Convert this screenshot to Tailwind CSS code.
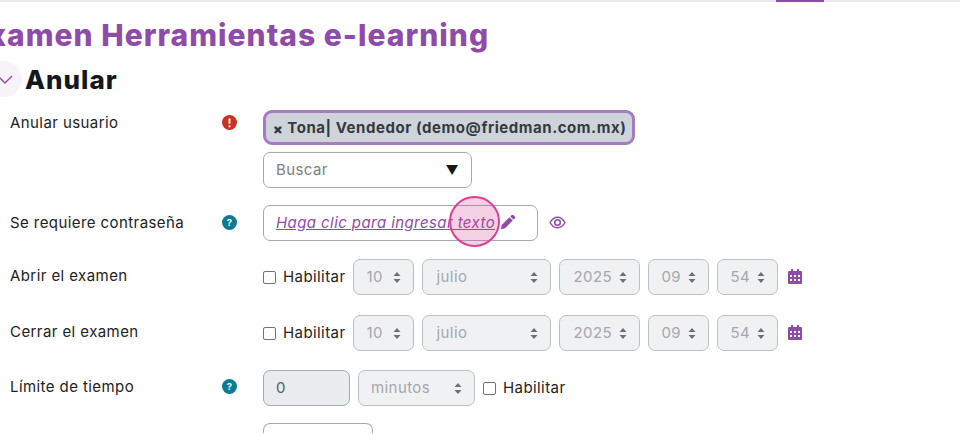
<!DOCTYPE html>
<html lang="es">
  <head>
    <meta charset="UTF-8" />
    <title>Examen Herramientas e-learning</title>
    <script src="https://cdn.jsdelivr.net/npm/@tailwindcss/browser@4"></script>
  </head>
  <body class="bg-white text-[#1d2125] font-['Inter',sans-serif] text-[15px] tracking-[0.42px] h-[434px] w-[960px] overflow-hidden relative">
    <!-- top nav edge with active tab -->
    <div class="h-[2px] bg-[#e6e9ee] pl-[776px]">
      <div class="h-[2px] w-[48px] bg-[#8f4ba8]"></div>
    </div>

    <h1 class="mt-[14px] ml-[-31px] h-[38px] text-[30px] leading-[38px] font-extrabold text-[#8f4ba8] whitespace-nowrap tracking-[1.02px]">Examen Herramientas e-learning</h1>

    <div class="flex items-center h-[36px] mt-[7px] ml-[-14px]">
      <span class="w-[36px] h-[36px] rounded-full bg-[#f7f3f9] flex items-center justify-center">
        <svg class="ml-[1px]" width="16" height="9" viewBox="0 0 16 9" fill="none" stroke="#8f4ba8" stroke-width="1.4"><path d="M1 1l7 7 7-7" /></svg>
      </span>
      <h2 class="ml-[3px] text-[26px] font-extrabold tracking-[1px] text-[#14181c]">Anular</h2>
    </div>

    <!-- Anular usuario -->
    <div class="flex mt-[13px] pl-[10px]">
      <div class="w-[212px] leading-[22px] pt-[2px]">Anular usuario</div>
      <div class="w-[41px] pt-[5px]">
        <svg width="15" height="15" viewBox="0 0 16 16"><circle cx="8" cy="8" r="8" fill="#ca3120" /><rect x="7" y="3.500" width="2" height="6" rx="1" fill="#fff" /><circle cx="8" cy="12" r="1.200" fill="#fff" /></svg>
      </div>
      <div>
        <div class="w-[372px] h-[35px] pt-[1px] rounded-[9px] border-[3px] border-[#a67cc0] bg-[#ced4da] flex items-center pl-[7px] font-bold tracking-[0.55px] text-[#343a40] whitespace-nowrap">
          <span class="text-[14px] font-black mr-[4px]">×</span>Tona| Vendedor (demo@friedman.com.mx)
        </div>
        <div class="mt-[7px] w-[209px] h-[36px] pt-[1px] rounded-[7px] border border-[#a5a9b3] flex items-center justify-between pl-[12px] pr-[12px] text-[#7b8085]">
          <span>Buscar</span><span class="text-[#14181c] text-[13px]">▼</span>
        </div>
      </div>
    </div>

    <!-- Se requiere contraseña -->
    <div class="flex items-center mt-[17px] pl-[10px] h-[36px]">
      <div class="w-[212px]">Se requiere contraseña</div>
      <div class="w-[41px] flex mb-[2px]">
        <svg width="15" height="15" viewBox="0 0 16 16"><circle cx="8" cy="8" r="8" fill="#0f7a93" /><text x="8" y="11.500" font-size="10" font-weight="700" text-anchor="middle" fill="#fff">?</text></svg>
      </div>
      <div class="relative w-[275px] h-[36px] rounded-[7px] border border-[#a5a9b3] flex items-center pl-[12px] italic text-[#8f4ba8] whitespace-nowrap">
        <span class="underline">Haga clic para ingresar texto</span>
        <svg class="ml-[5px] mb-[2px]" width="16" height="16" viewBox="0 0 16 16" fill="#8f4ba8"><path d="M11.500 1.200a1.400 1.400 0 0 1 2 0l1.300 1.300a1.400 1.400 0 0 1 0 2L13.600 5.700 10.300 2.400zM9.400 3.300l3.300 3.300-7.600 7.600-4.300 1 1-4.300z" /></svg>
        <span class="absolute left-[185px] top-[-10px] w-[51px] h-[51px] rounded-full bg-[#d04490]/25 border-2 border-[#dc3f94]"></span>
      </div>
      <svg class="ml-[11px] mb-[1px]" width="17" height="13" viewBox="0 0 17 13" fill="none" stroke="#8f4ba8" stroke-width="1.500"><path d="M1 6.500C3 3 5.500 1.200 8.500 1.200S14 3 16 6.500C14 10 11.500 11.800 8.500 11.800S3 10 1 6.500z" /><circle cx="8.500" cy="6.500" r="2.800" /></svg>
    </div>

    <!-- Abrir el examen -->
    <div class="flex items-center mt-[18px] pl-[10px] h-[36px]">
      <div class="w-[253px] mb-[2px]">Abrir el examen</div>
      <label class="flex items-center whitespace-nowrap">
        <span class="w-[13px] h-[13px] rounded-[2px] border border-[#6f7378] mr-[7px]"></span>Habilitar
      </label>
      <div class="ml-[8px] flex gap-[8px] text-[#a4a8ad]">
        <div class="w-[61px] h-[36px] rounded-[7px] border border-[#bcc0c6] bg-[#f0f1f3] flex items-center justify-between pl-[12px] pr-[12px]">10<svg width="8" height="11" viewBox="0 0 8 11" fill="#6b7075"><path d="M4 0l3.500 4H.5zM4 11L.5 7h7z" /></svg></div>
        <div class="w-[129px] h-[36px] rounded-[7px] border border-[#bcc0c6] bg-[#f0f1f3] flex items-center justify-between pl-[13px] pr-[12px]">julio<svg width="8" height="11" viewBox="0 0 8 11" fill="#6b7075"><path d="M4 0l3.500 4H.5zM4 11L.5 7h7z" /></svg></div>
        <div class="w-[81px] h-[36px] rounded-[7px] border border-[#bcc0c6] bg-[#f0f1f3] flex items-center justify-between pl-[13px] pr-[12px]">2025<svg width="8" height="11" viewBox="0 0 8 11" fill="#6b7075"><path d="M4 0l3.500 4H.5zM4 11L.5 7h7z" /></svg></div>
        <div class="w-[61px] h-[36px] rounded-[7px] border border-[#bcc0c6] bg-[#f0f1f3] flex items-center justify-between pl-[12px] pr-[12px]">09<svg width="8" height="11" viewBox="0 0 8 11" fill="#6b7075"><path d="M4 0l3.500 4H.5zM4 11L.5 7h7z" /></svg></div>
        <div class="w-[61px] h-[36px] rounded-[7px] border border-[#bcc0c6] bg-[#f0f1f3] flex items-center justify-between pl-[12px] pr-[12px]">54<svg width="8" height="11" viewBox="0 0 8 11" fill="#6b7075"><path d="M4 0l3.500 4H.5zM4 11L.5 7h7z" /></svg></div>
      </div>
      <svg class="ml-[10px] mb-[1px]" width="14" height="15" viewBox="0 0 14 15" fill="#8f4ba8"><path fill-rule="evenodd" d="M3 0h2v2h4V0h2v2h2a1 1 0 0 1 1 1v11a1 1 0 0 1-1 1H1a1 1 0 0 1-1-1V3a1 1 0 0 1 1-1h2zM2 6v2h2V6zm4 0v2h2V6zm4 0v2h2V6zM2 10v2h2v-2zm4 0v2h2v-2zm4 0v2h2v-2z" /></svg>
    </div>

    <!-- Cerrar el examen -->
    <div class="flex items-center mt-[20px] pl-[10px] h-[36px]">
      <div class="w-[253px] mb-[2px]">Cerrar el examen</div>
      <label class="flex items-center whitespace-nowrap">
        <span class="w-[13px] h-[13px] rounded-[2px] border border-[#6f7378] mr-[7px]"></span>Habilitar
      </label>
      <div class="ml-[8px] flex gap-[8px] text-[#a4a8ad]">
        <div class="w-[61px] h-[36px] rounded-[7px] border border-[#bcc0c6] bg-[#f0f1f3] flex items-center justify-between pl-[12px] pr-[12px]">10<svg width="8" height="11" viewBox="0 0 8 11" fill="#6b7075"><path d="M4 0l3.500 4H.5zM4 11L.5 7h7z" /></svg></div>
        <div class="w-[129px] h-[36px] rounded-[7px] border border-[#bcc0c6] bg-[#f0f1f3] flex items-center justify-between pl-[13px] pr-[12px]">julio<svg width="8" height="11" viewBox="0 0 8 11" fill="#6b7075"><path d="M4 0l3.500 4H.5zM4 11L.5 7h7z" /></svg></div>
        <div class="w-[81px] h-[36px] rounded-[7px] border border-[#bcc0c6] bg-[#f0f1f3] flex items-center justify-between pl-[13px] pr-[12px]">2025<svg width="8" height="11" viewBox="0 0 8 11" fill="#6b7075"><path d="M4 0l3.500 4H.5zM4 11L.5 7h7z" /></svg></div>
        <div class="w-[61px] h-[36px] rounded-[7px] border border-[#bcc0c6] bg-[#f0f1f3] flex items-center justify-between pl-[12px] pr-[12px]">09<svg width="8" height="11" viewBox="0 0 8 11" fill="#6b7075"><path d="M4 0l3.500 4H.5zM4 11L.5 7h7z" /></svg></div>
        <div class="w-[61px] h-[36px] rounded-[7px] border border-[#bcc0c6] bg-[#f0f1f3] flex items-center justify-between pl-[12px] pr-[12px]">54<svg width="8" height="11" viewBox="0 0 8 11" fill="#6b7075"><path d="M4 0l3.500 4H.5zM4 11L.5 7h7z" /></svg></div>
      </div>
      <svg class="ml-[10px] mb-[1px]" width="14" height="15" viewBox="0 0 14 15" fill="#8f4ba8"><path fill-rule="evenodd" d="M3 0h2v2h4V0h2v2h2a1 1 0 0 1 1 1v11a1 1 0 0 1-1 1H1a1 1 0 0 1-1-1V3a1 1 0 0 1 1-1h2zM2 6v2h2V6zm4 0v2h2V6zm4 0v2h2V6zM2 10v2h2v-2zm4 0v2h2v-2zm4 0v2h2v-2z" /></svg>
    </div>

    <!-- Límite de tiempo -->
    <div class="flex items-center mt-[19px] pl-[10px] h-[36px]">
      <div class="w-[212px] mb-[2px]">Límite de tiempo</div>
      <div class="w-[41px] flex mb-[3px]">
        <svg width="15" height="15" viewBox="0 0 16 16"><circle cx="8" cy="8" r="8" fill="#0f7a93" /><text x="8" y="11.500" font-size="10" font-weight="700" text-anchor="middle" fill="#fff">?</text></svg>
      </div>
      <div class="w-[87px] h-[36px] rounded-[7px] border border-[#a5a9b3] bg-[#e9ecef] flex items-center pl-[12px] text-[#555a60]">0</div>
      <div class="ml-[8px] w-[117px] h-[36px] rounded-[7px] border border-[#bcc0c6] bg-[#f0f1f3] flex items-center justify-between pl-[12px] pr-[12px] text-[#a4a8ad]">minutos<svg width="8" height="11" viewBox="0 0 8 11" fill="#6b7075"><path d="M4 0l3.500 4H.5zM4 11L.5 7h7z" /></svg></div>
      <label class="ml-[8px] flex items-center">
        <span class="w-[13px] h-[13px] rounded-[2px] border border-[#6f7378] mr-[7px]"></span>Habilitar
      </label>
    </div>

    <!-- next field, cut off by the window -->
    <div class="mt-[17px] ml-[263px] w-[110px] h-[10px] rounded-t-[7px] border border-b-0 border-[#a5a9b3]"></div>
  </body>
</html>
